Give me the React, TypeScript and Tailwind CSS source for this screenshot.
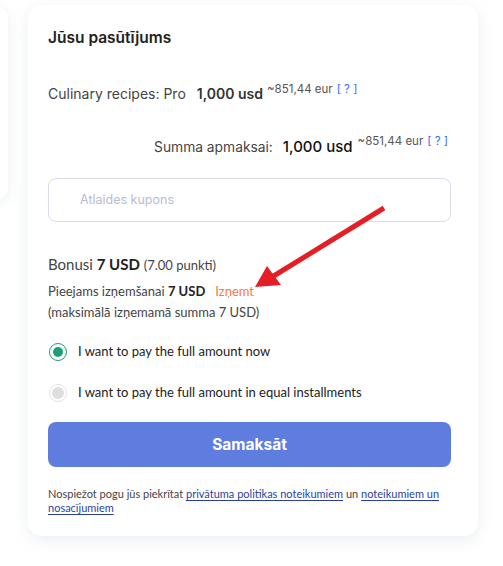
import React from "react";

export default function App() {
  return (
    <div className="relative w-[503px] h-[566px] bg-white overflow-hidden">
      <div className="flex items-start pt-[5px] gap-[20px]">
        <div className="shrink-0 w-[300px] ml-[-292px] h-[196px] bg-white rounded-[14px] shadow-[0_2px_12px_rgba(140,160,180,0.18)]" />
        <div className="shrink-0 w-[450px] bg-white rounded-[14px] shadow-[0_4px_16px_rgba(140,160,180,0.18)] px-[20px] pt-[23px] pb-[21px]">
          <h2 className="text-[15.5px] leading-[20px] font-semibold text-[#222] [font-family:Inter,sans-serif]">
            Jūsu pasūtījums
          </h2>

          <div className="mt-[36px] h-[20px] flex items-baseline text-[14px] leading-[20px] text-[#444] [font-family:Inter,sans-serif]">
            <span>Culinary recipes: Pro</span>
            <span className="ml-[11px] font-semibold text-[#333]">1,000 usd</span>
            <span className="ml-[4px] text-[11.5px] relative top-[-6px] text-[#555]">~851,44 eur</span>
            <span className="ml-[4px] text-[11.5px] relative top-[-6px] text-[#3b6cf5]">[ ? ]</span>
          </div>

          <div className="mt-[33px] h-[20px] flex items-baseline justify-end pr-[10px] text-[14px] leading-[20px] text-[#444] [font-family:Inter,sans-serif]">
            <span className="text-[13.8px]">Summa apmaksai:</span>
            <span className="ml-[10px] text-[15px] font-medium text-[#111]">1,000 usd</span>
            <span className="ml-[5px] text-[11.5px] relative top-[-7px] text-[#555]">~851,44 eur</span>
            <span className="ml-[4px] text-[11.5px] relative top-[-7px] text-[#3b6cf5]">[ ? ]</span>
          </div>

          <div className="mt-[21px] mr-[7px] h-[44px] rounded-[8px] border border-[#dcd9ef] flex items-center pl-[31px] text-[12.5px] text-[#b9bdd0] [font-family:Inter,sans-serif]">
            Atlaides kupons
          </div>

          <div className="mt-[32px] [font-family:Lato,sans-serif] text-[#444]">
            <div className="text-[15px] leading-[20px]">
              Bonusi <span className="font-bold text-[#222]">7 USD</span>{" "}
              <span className="text-[13px]">(7.00 punkti)</span>
            </div>
            <div className="mt-[6px] text-[13px] leading-[20px]">
              Pieejams izņemšanai <span className="font-bold text-[#222]">7 USD</span>
              <span className="ml-[10px] text-[#f47b4d]">Izņemt</span>
            </div>
            <div className="mt-[1px] text-[13px] leading-[20px]">(maksimālā izņemamā summa 7 USD)</div>
          </div>

          <div className="mt-[21px] flex flex-col gap-[23px] [font-family:Lato,sans-serif] text-[13px] text-[#222]">
            <div className="flex items-center h-[18px]">
              <span className="w-[18px] h-[18px] rounded-full border-[1.5px] border-[#1f9e6f] flex items-center justify-center ml-[1px]">
                <span className="w-[10px] h-[10px] rounded-full bg-[#1f9e6f]" />
              </span>
              <span className="ml-[11px]">I want to pay the full amount now</span>
            </div>
            <div className="flex items-center h-[18px]">
              <span className="w-[18px] h-[18px] rounded-full border border-[#e2e2e2] flex items-center justify-center ml-[1px]">
                <span className="w-[12px] h-[12px] rounded-full bg-[#dedede]" />
              </span>
              <span className="ml-[11px]">I want to pay the full amount in equal installments</span>
            </div>
          </div>

          <button className="mt-[20px] w-[403px] h-[45px] rounded-[8px] bg-[#5f7ddf] text-white text-[15.5px] font-bold [font-family:Inter,sans-serif]">
            Samaksāt
          </button>

          <div className="mt-[20px] text-[11px] leading-[14px] text-[#444] [font-family:Lato,sans-serif]">
            <div>
              Nospiežot pogu jūs piekrītat{" "}
              <a className="text-[#2b3fa3] underline decoration-[#2b3fa3] underline-offset-[2px]">privātuma politikas noteikumiem</a>{" "}
              un{" "}
              <a className="text-[#2b3fa3] underline decoration-[#2b3fa3] underline-offset-[2px]">noteikumiem un</a>
            </div>
            <div>
              <a className="text-[#2b3fa3] underline decoration-[#2b3fa3] underline-offset-[2px]">nosacījumiem</a>
            </div>
          </div>
        </div>
      </div>

      <svg className="absolute left-0 top-0 pointer-events-none" width="503" height="566" viewBox="0 0 503 566">
        <line x1="384" y1="208" x2="272" y2="277" stroke="#e31e24" strokeWidth="5" strokeLinecap="butt" />
        <polygon points="255,287 267,266 281,285" fill="#e31e24" />
      </svg>
    </div>
  );
}
